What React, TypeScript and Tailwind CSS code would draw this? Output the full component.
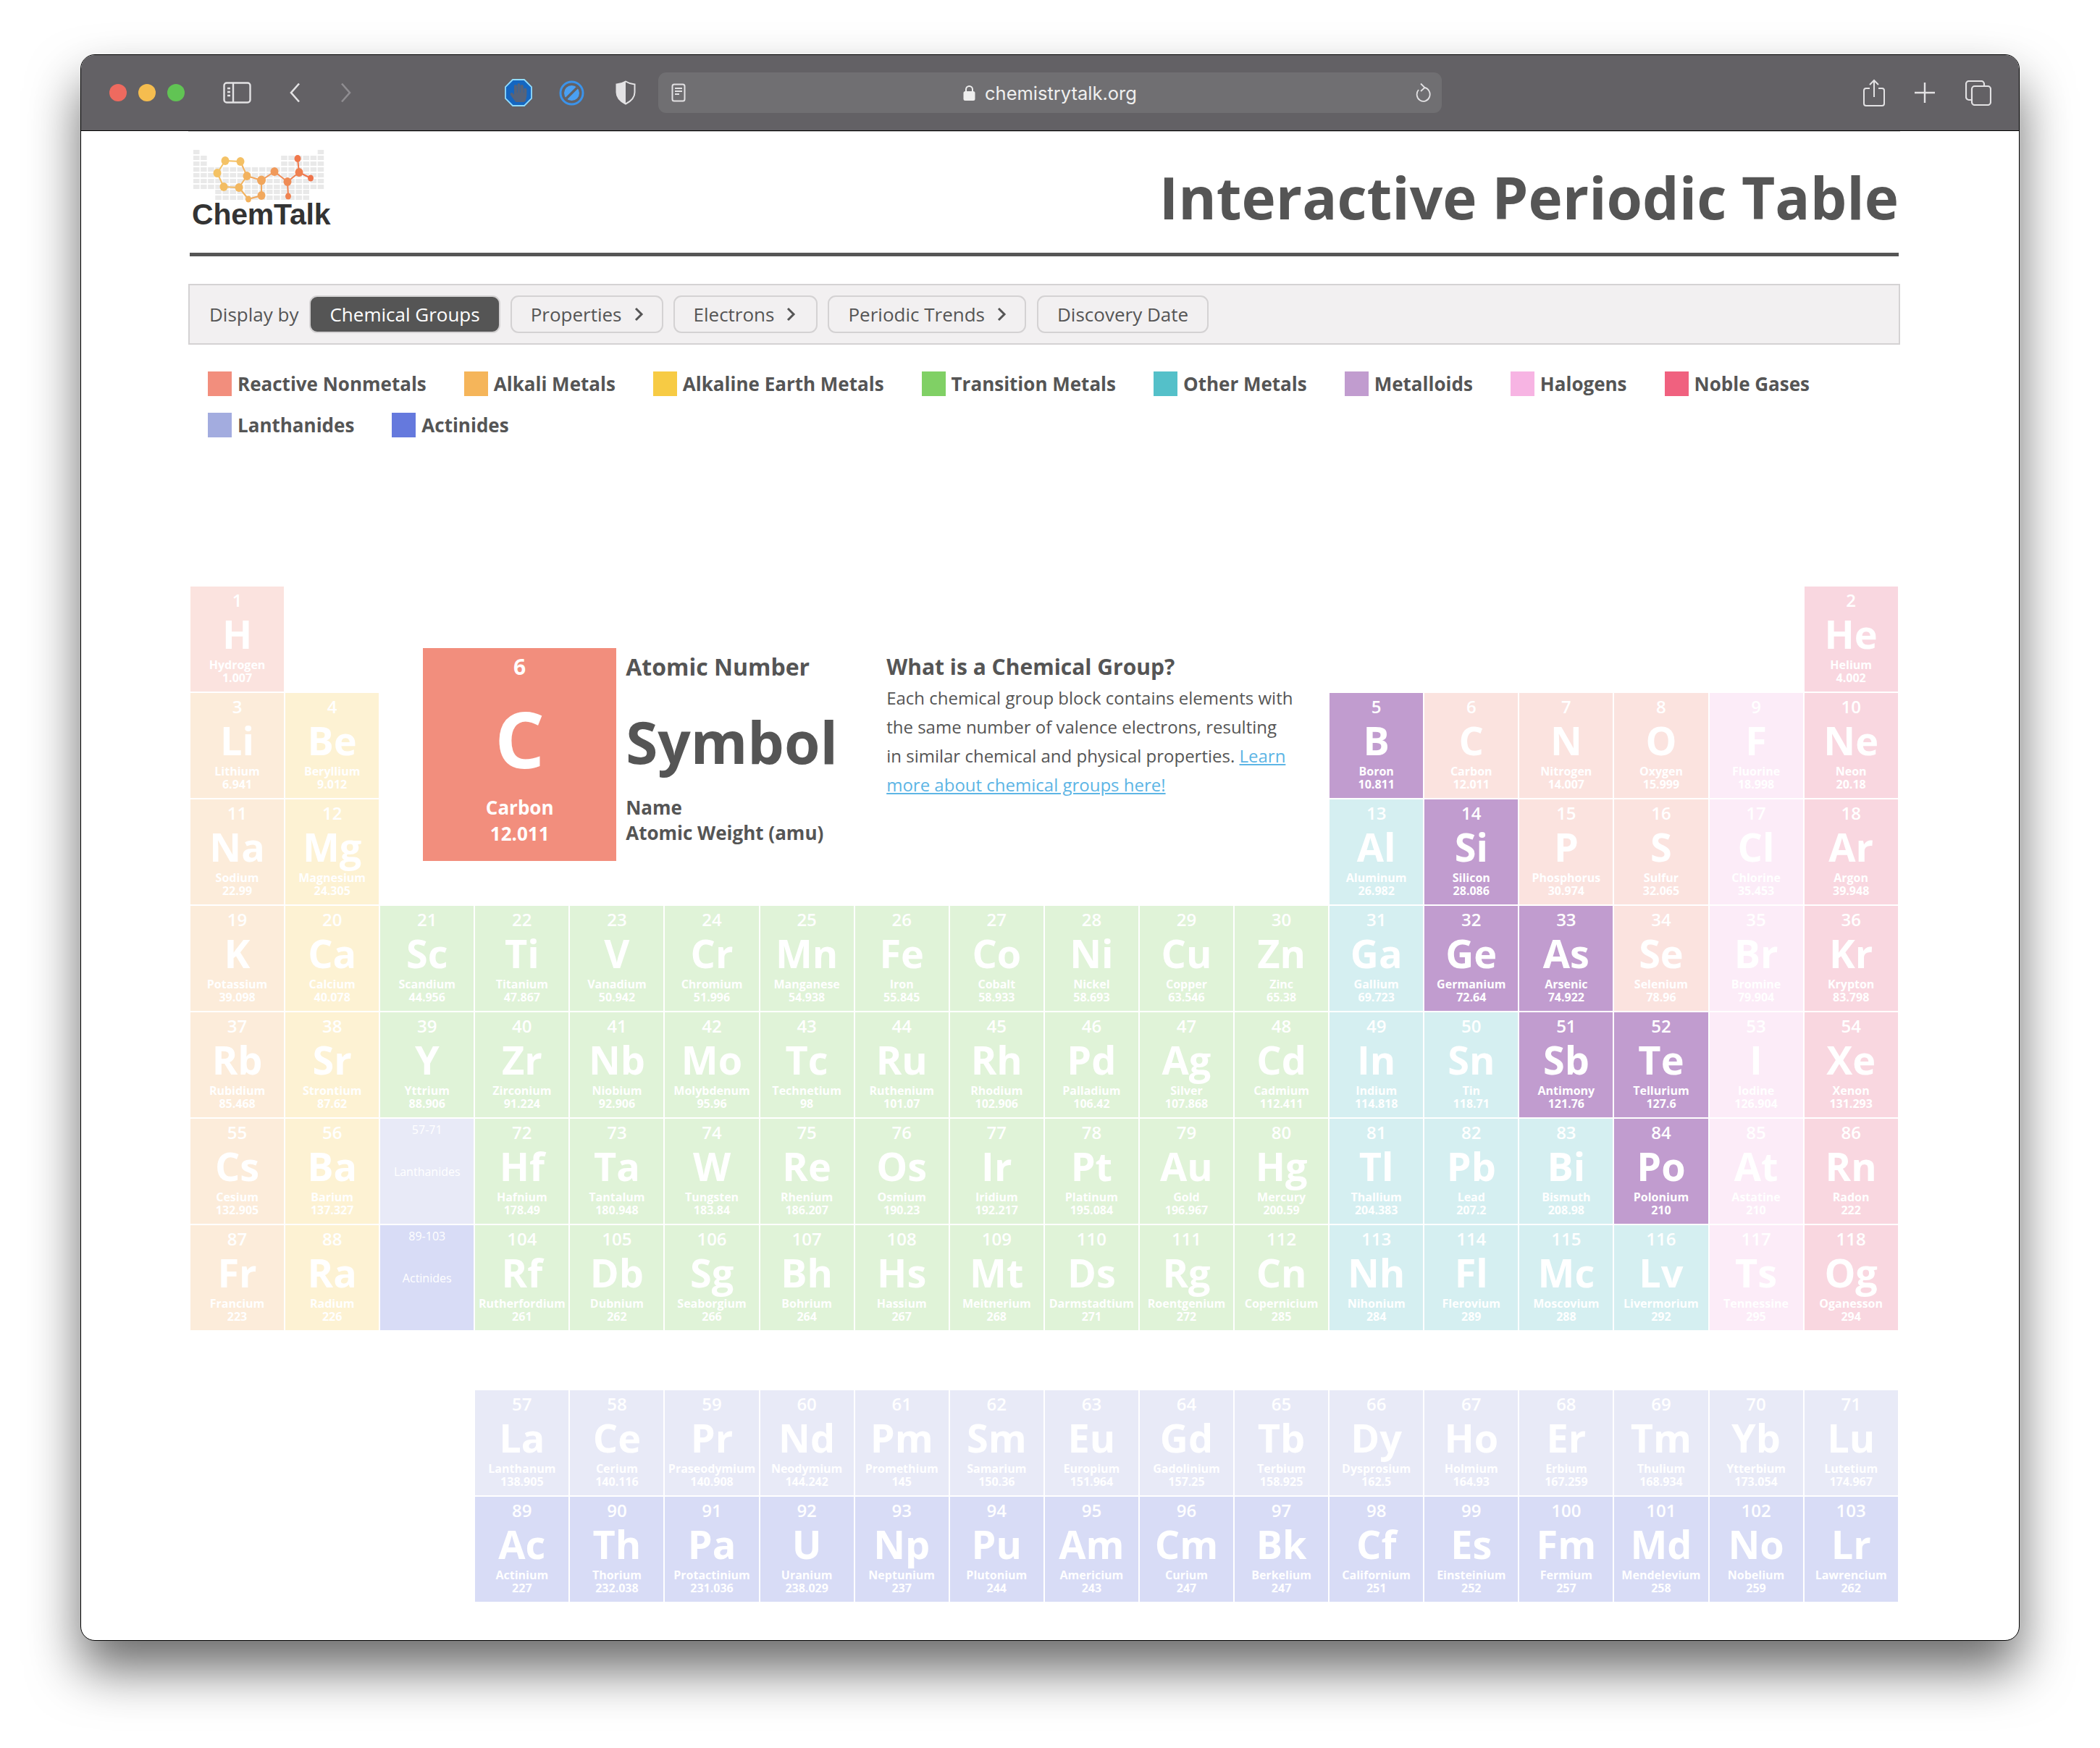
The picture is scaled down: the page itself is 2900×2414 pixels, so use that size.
import { FaHandPaper } from 'react-icons/fa';

type Group = 'reactive' | 'alkali' | 'earth' | 'transition' | 'other' | 'metalloid' | 'halogen' | 'noble' | 'lanthanide' | 'actinide';

const cellColors: Record<Group, string> = {
  reactive: 'bg-[#fbe3df]',
  alkali: 'bg-[#fcecda]',
  earth: 'bg-[#fdf2d3]',
  transition: 'bg-[#e0f3d8]',
  other: 'bg-[#d5eff1]',
  metalloid: 'bg-[#c19ccf]',
  halogen: 'bg-[#fcecf8]',
  noble: 'bg-[#f9d7e0]',
  lanthanide: 'bg-[#e8eaf7]',
  actinide: 'bg-[#d8dcf6]',
};

const legend = [
  { label: 'Reactive Nonmetals', color: 'bg-[#f28e7d]' },
  { label: 'Alkali Metals', color: 'bg-[#f5b55a]' },
  { label: 'Alkaline Earth Metals', color: 'bg-[#f7cb44]' },
  { label: 'Transition Metals', color: 'bg-[#80d065]' },
  { label: 'Other Metals', color: 'bg-[#54c0c9]' },
  { label: 'Metalloids', color: 'bg-[#c19ccf]' },
  { label: 'Halogens', color: 'bg-[#f7b4e3]' },
  { label: 'Noble Gases', color: 'bg-[#f0617f]' },
  { label: 'Lanthanides', color: 'bg-[#a3acdf]' },
  { label: 'Actinides', color: 'bg-[#6579dd]' },
];

// number|symbol|name|weight|group|row|col
const raw = `1|H|Hydrogen|1.007|reactive|1|1
2|He|Helium|4.002|noble|1|18
3|Li|Lithium|6.941|alkali|2|1
4|Be|Beryllium|9.012|earth|2|2
5|B|Boron|10.811|metalloid|2|13
6|C|Carbon|12.011|reactive|2|14
7|N|Nitrogen|14.007|reactive|2|15
8|O|Oxygen|15.999|reactive|2|16
9|F|Fluorine|18.998|halogen|2|17
10|Ne|Neon|20.18|noble|2|18
11|Na|Sodium|22.99|alkali|3|1
12|Mg|Magnesium|24.305|earth|3|2
13|Al|Aluminum|26.982|other|3|13
14|Si|Silicon|28.086|metalloid|3|14
15|P|Phosphorus|30.974|reactive|3|15
16|S|Sulfur|32.065|reactive|3|16
17|Cl|Chlorine|35.453|halogen|3|17
18|Ar|Argon|39.948|noble|3|18
19|K|Potassium|39.098|alkali|4|1
20|Ca|Calcium|40.078|earth|4|2
21|Sc|Scandium|44.956|transition|4|3
22|Ti|Titanium|47.867|transition|4|4
23|V|Vanadium|50.942|transition|4|5
24|Cr|Chromium|51.996|transition|4|6
25|Mn|Manganese|54.938|transition|4|7
26|Fe|Iron|55.845|transition|4|8
27|Co|Cobalt|58.933|transition|4|9
28|Ni|Nickel|58.693|transition|4|10
29|Cu|Copper|63.546|transition|4|11
30|Zn|Zinc|65.38|transition|4|12
31|Ga|Gallium|69.723|other|4|13
32|Ge|Germanium|72.64|metalloid|4|14
33|As|Arsenic|74.922|metalloid|4|15
34|Se|Selenium|78.96|reactive|4|16
35|Br|Bromine|79.904|halogen|4|17
36|Kr|Krypton|83.798|noble|4|18
37|Rb|Rubidium|85.468|alkali|5|1
38|Sr|Strontium|87.62|earth|5|2
39|Y|Yttrium|88.906|transition|5|3
40|Zr|Zirconium|91.224|transition|5|4
41|Nb|Niobium|92.906|transition|5|5
42|Mo|Molybdenum|95.96|transition|5|6
43|Tc|Technetium|98|transition|5|7
44|Ru|Ruthenium|101.07|transition|5|8
45|Rh|Rhodium|102.906|transition|5|9
46|Pd|Palladium|106.42|transition|5|10
47|Ag|Silver|107.868|transition|5|11
48|Cd|Cadmium|112.411|transition|5|12
49|In|Indium|114.818|other|5|13
50|Sn|Tin|118.71|other|5|14
51|Sb|Antimony|121.76|metalloid|5|15
52|Te|Tellurium|127.6|metalloid|5|16
53|I|Iodine|126.904|halogen|5|17
54|Xe|Xenon|131.293|noble|5|18
55|Cs|Cesium|132.905|alkali|6|1
56|Ba|Barium|137.327|earth|6|2
72|Hf|Hafnium|178.49|transition|6|4
73|Ta|Tantalum|180.948|transition|6|5
74|W|Tungsten|183.84|transition|6|6
75|Re|Rhenium|186.207|transition|6|7
76|Os|Osmium|190.23|transition|6|8
77|Ir|Iridium|192.217|transition|6|9
78|Pt|Platinum|195.084|transition|6|10
79|Au|Gold|196.967|transition|6|11
80|Hg|Mercury|200.59|transition|6|12
81|Tl|Thallium|204.383|other|6|13
82|Pb|Lead|207.2|other|6|14
83|Bi|Bismuth|208.98|other|6|15
84|Po|Polonium|210|metalloid|6|16
85|At|Astatine|210|halogen|6|17
86|Rn|Radon|222|noble|6|18
87|Fr|Francium|223|alkali|7|1
88|Ra|Radium|226|earth|7|2
104|Rf|Rutherfordium|261|transition|7|4
105|Db|Dubnium|262|transition|7|5
106|Sg|Seaborgium|266|transition|7|6
107|Bh|Bohrium|264|transition|7|7
108|Hs|Hassium|267|transition|7|8
109|Mt|Meitnerium|268|transition|7|9
110|Ds|Darmstadtium|271|transition|7|10
111|Rg|Roentgenium|272|transition|7|11
112|Cn|Copernicium|285|transition|7|12
113|Nh|Nihonium|284|other|7|13
114|Fl|Flerovium|289|other|7|14
115|Mc|Moscovium|288|other|7|15
116|Lv|Livermorium|292|other|7|16
117|Ts|Tennessine|295|halogen|7|17
118|Og|Oganesson|294|noble|7|18
57|La|Lanthanum|138.905|lanthanide|9|4
58|Ce|Cerium|140.116|lanthanide|9|5
59|Pr|Praseodymium|140.908|lanthanide|9|6
60|Nd|Neodymium|144.242|lanthanide|9|7
61|Pm|Promethium|145|lanthanide|9|8
62|Sm|Samarium|150.36|lanthanide|9|9
63|Eu|Europium|151.964|lanthanide|9|10
64|Gd|Gadolinium|157.25|lanthanide|9|11
65|Tb|Terbium|158.925|lanthanide|9|12
66|Dy|Dysprosium|162.5|lanthanide|9|13
67|Ho|Holmium|164.93|lanthanide|9|14
68|Er|Erbium|167.259|lanthanide|9|15
69|Tm|Thulium|168.934|lanthanide|9|16
70|Yb|Ytterbium|173.054|lanthanide|9|17
71|Lu|Lutetium|174.967|lanthanide|9|18
89|Ac|Actinium|227|actinide|10|4
90|Th|Thorium|232.038|actinide|10|5
91|Pa|Protactinium|231.036|actinide|10|6
92|U|Uranium|238.029|actinide|10|7
93|Np|Neptunium|237|actinide|10|8
94|Pu|Plutonium|244|actinide|10|9
95|Am|Americium|243|actinide|10|10
96|Cm|Curium|247|actinide|10|11
97|Bk|Berkelium|247|actinide|10|12
98|Cf|Californium|251|actinide|10|13
99|Es|Einsteinium|252|actinide|10|14
100|Fm|Fermium|257|actinide|10|15
101|Md|Mendelevium|258|actinide|10|16
102|No|Nobelium|259|actinide|10|17
103|Lr|Lawrencium|262|actinide|10|18`;

const elements = raw.split('\n').map((line) => {
  const [num, symbol, name, weight, group, row, col] = line.split('|');
  return { num, symbol, name, weight, group: group as Group, row: Number(row), col: Number(col) };
});

const ChemLogo = () => {
  const rowTops = [0, 8, 16, 24, 32, 40, 48, 55, 63];
  const squares: { x: number; y: number }[] = [];
  rowTops.forEach((y, r) => {
    for (let c = 0; c < 18; c++) {
      if (r === 0 && c !== 0 && c !== 17) continue;
      if ((r === 1 || r === 2) && c > 1 && c < 12) continue;
      if (r >= 7 && (c < 3 || c > 15)) continue;
      squares.push({ x: c * 10.1, y });
    }
  });
  const nodes: [number, number, number, string][] = [
    [44, 15, 5.5, '#f4c266'], [65, 16, 5.5, '#f4c064'], [33, 32, 5.5, '#f4c264'], [74, 36, 5.5, '#f2b25f'],
    [94, 42, 6, '#f1a65c'], [112, 30, 5.5, '#f0995a'], [130, 44, 5.5, '#ef8b55'], [146, 31, 5.5, '#ef8050'],
    [144, 12, 4.5, '#f0784c'], [162, 39, 4, '#ef744b'], [131, 64, 4, '#ef8250'], [42, 51, 5.5, '#f3bd62'],
    [63, 52, 5.5, '#f2b760'], [94, 63, 5.5, '#f1a85d'], [76, 68, 4, '#f2b25f'],
  ];
  const bonds = [[0, 1], [0, 2], [1, 3], [2, 11], [11, 12], [12, 3], [3, 4], [4, 5], [5, 6], [6, 7], [7, 8], [7, 9], [6, 10], [4, 13], [12, 14], [14, 13]];
  return (
    <svg width="192" height="74" viewBox="0 0 192 74">
      {squares.map((s) => (
        <rect key={`${s.x}-${s.y}`} x={s.x} y={s.y} width="8.5" height="6" fill="#e9e9e9" />
      ))}
      {bonds.map(([a, b]) => (
        <line key={`${a}-${b}`} x1={nodes[a][0]} y1={nodes[a][1]} x2={nodes[b][0]} y2={nodes[b][1]} stroke={nodes[b][3]} strokeWidth="2" />
      ))}
      {nodes.map(([x, y, r, c]) => (
        <ellipse key={`${x}-${y}`} cx={x} cy={y} rx={r} ry={r + 0.5} fill={c} />
      ))}
    </svg>
  );
};

const SidebarIcon = () => (
  <svg width="39" height="30" viewBox="0 0 39 30" fill="none" stroke="#e3e2e4" strokeWidth="2.4">
    <rect x="1.5" y="1.5" width="36" height="27" rx="3.5" />
    <line x1="14" y1="2" x2="14" y2="28" />
    <line x1="6" y1="9" x2="10" y2="9" />
    <line x1="6" y1="14" x2="10" y2="14" />
    <line x1="6" y1="19" x2="10" y2="19" />
  </svg>
);

const AdblockIcon = () => (
  <svg width="38" height="38" viewBox="0 0 38 38">
    <polygon points="11,1 27,1 37,11 37,27 27,37 11,37 1,27 1,11" fill="#1566c0" stroke="#8fdcff" strokeWidth="1.8" />
    <FaHandPaper x="6" y="6" size={26} color="#56637a" />
  </svg>
);

const BlockIcon = () => (
  <svg width="35" height="35" viewBox="0 0 35 35">
    <circle cx="17.5" cy="17.5" r="15.5" fill="none" stroke="#3b93ea" strokeWidth="3" />
    <circle cx="17.5" cy="17.5" r="10.5" fill="#4aa0f3" />
    <line x1="10" y1="25" x2="25" y2="10" stroke="#636165" strokeWidth="3.4" />
  </svg>
);

const ShieldIcon = () => (
  <svg width="28" height="34" viewBox="0 0 28 34">
    <path d="M14 1.5C10 4 6 5 1.5 5.5v11c0 7 5.5 12.5 12.5 16 7-3.5 12.5-9 12.5-16v-11C22 5 18 4 14 1.5Z" fill="none" stroke="#e3e2e4" strokeWidth="2" />
    <path d="M14 1.5C10 4 6 5 1.5 5.5v11c0 7 5.5 12.5 12.5 16Z" fill="#e3e2e4" />
  </svg>
);

const ReaderIcon = () => (
  <svg width="20" height="26" viewBox="0 0 20 26" fill="none" stroke="#e3e2e4" strokeWidth="2">
    <rect x="1.5" y="1.5" width="17" height="23" rx="2.5" />
    <line x1="5" y1="7" x2="15" y2="7" />
    <line x1="5" y1="11" x2="15" y2="11" />
    <line x1="5" y1="15" x2="11" y2="15" />
  </svg>
);

const LockIcon = () => (
  <svg width="17" height="21" viewBox="0 0 17 21" fill="#eeeeee">
    <rect x="0.5" y="8" width="16" height="13" rx="2.5" />
    <path d="M4 9V5.5a4.5 4.5 0 0 1 9 0V9" fill="none" stroke="#eeeeee" strokeWidth="2" />
  </svg>
);

const ReloadIcon = () => (
  <svg width="22" height="28" viewBox="0 0 22 28" fill="none" stroke="#e3e2e4" strokeWidth="1.8">
    <path d="M13 7a9 9.5 0 1 1-8 3" />
    <path d="M8 1.5l5.5 5.5L8 12" />
  </svg>
);

const ShareIcon = () => (
  <svg width="30" height="38" viewBox="0 0 30 38" fill="none" stroke="#e3e2e4" strokeWidth="2">
    <path d="M9 13H4a3 3 0 0 0-3 3v18a3 3 0 0 0 3 3h22a3 3 0 0 0 3-3V16a3 3 0 0 0-3-3h-5" />
    <path d="M15 25V2M9 8l6-6 6 6" />
  </svg>
);

const PlusIcon = () => (
  <svg width="28" height="28" viewBox="0 0 28 28" stroke="#e3e2e4" strokeWidth="2.4">
    <line x1="14" y1="0" x2="14" y2="28" />
    <line x1="0" y1="14" x2="28" y2="14" />
  </svg>
);

const TabsIcon = () => (
  <svg width="36" height="35" viewBox="0 0 36 35" fill="none" stroke="#e3e2e4" strokeWidth="2.2">
    <path d="M8 27H5a4 4 0 0 1-4-4V5a4 4 0 0 1 4-4h17a4 4 0 0 1 4 4v3" />
    <rect x="9" y="8" width="26" height="26" rx="4" />
  </svg>
);

const Chevron = () => (
  <svg className="ml-[16px]" width="14" height="20" viewBox="0 0 14 20" fill="none" stroke="#555555" strokeWidth="3">
    <path d="M3 2l8 8-8 8" />
  </svg>
);

const ElementCell = ({ el }: { el: (typeof elements)[number] }) => (
  <div
    className={`${cellColors[el.group]} flex flex-col items-center pt-[7px] text-white`}
    style={{ gridRow: el.row, gridColumn: el.col }}
  >
    <div className="text-[24px] leading-[24px] font-semibold">{el.num}</div>
    <div className="mt-[7px] text-[54px] leading-[54px] font-bold">{el.symbol}</div>
    <div className="mt-[7px] text-[16px] leading-[18px] font-bold whitespace-nowrap">{el.name}</div>
    <div className="text-[16px] leading-[18px] font-bold">{el.weight}</div>
  </div>
);

const App = () => {
  return (
    <div className="h-[2414px] w-[2900px] overflow-hidden bg-white pt-[75px] pl-[111px] font-['Open_Sans',sans-serif] text-[#555555]">
      <div className="h-[2191px] w-[2678px] overflow-hidden rounded-[20px] border border-black bg-white shadow-[0_40px_70px_rgba(0,0,0,0.58)]">
        {/* Browser toolbar */}
        <div className="flex h-[105px] items-center border-b border-black bg-[#636165] pl-[39px]">
          <div className="h-[24px] w-[24px] rounded-full bg-[#ee6a5f]" />
          <div className="ml-[16px] h-[24px] w-[24px] rounded-full bg-[#f5bd4f]" />
          <div className="ml-[16px] h-[24px] w-[24px] rounded-full bg-[#61c454]" />
          <div className="ml-[53px]">
            <SidebarIcon />
          </div>
          <svg className="ml-[52px]" width="16" height="28" viewBox="0 0 16 28" fill="none" stroke="#e3e2e4" strokeWidth="2.6">
            <path d="M14 1.5 3 14l11 12.5" />
          </svg>
          <svg className="ml-[55px]" width="16" height="28" viewBox="0 0 16 28" fill="none" stroke="#8f8d91" strokeWidth="2.6">
            <path d="M2 1.5 13 14 2 26.5" />
          </svg>
          <div className="ml-[211px]">
            <AdblockIcon />
          </div>
          <div className="ml-[37px]">
            <BlockIcon />
          </div>
          <div className="ml-[43px]">
            <ShieldIcon />
          </div>
          <div className="ml-[31px] flex h-[56px] w-[1082px] items-center rounded-[11px] bg-[#706f72] pr-[15px] pl-[18px]">
            <ReaderIcon />
            <div className="ml-[383px]">
              <LockIcon />
            </div>
            <div className="mt-[2px] ml-[13px] font-['Inter',sans-serif] text-[25.5px] leading-none font-normal text-[#efefef]">chemistrytalk.org</div>
            <div className="ml-auto">
              <ReloadIcon />
            </div>
          </div>
          <div className="ml-[582px]">
            <ShareIcon />
          </div>
          <div className="ml-[41px]">
            <PlusIcon />
          </div>
          <div className="ml-[42px]">
            <TabsIcon />
          </div>
        </div>

        <div className="ml-[148px] w-[2364px] border-t border-[#c9c9c9]">
          {/* Header */}
          <div className="mx-[2px] flex h-[172px] justify-between border-b-[5px] border-[#555555]">
            <div className="ml-[5px] pt-[25px]">
              <ChemLogo />
              <div className="-mt-[2px] -ml-[2px] font-['Liberation_Sans',sans-serif] text-[41px] leading-[34px] font-bold tracking-[-0.2px] text-[#333333]">ChemTalk</div>
            </div>
            <h1 className="mt-[50px] text-[80px] leading-[80px] font-bold whitespace-nowrap">Interactive Periodic Table</h1>
          </div>

          {/* Display controls */}
          <div className="mt-[38px] flex h-[84px] items-center border-2 border-[#d4d2d3] bg-[#f2f0f1] pl-[27px] text-[26px]">
            <span className="mr-[15px]">Display by</span>
            <button className="flex h-[52px] items-center rounded-[11px] border-2 border-[#d4d2d3] bg-[#555555] px-[26px] text-white">Chemical Groups</button>
            <button className="ml-[14px] flex h-[52px] items-center rounded-[11px] border-2 border-[#d4d2d3] pr-[25px] pl-[26px]">
              Properties
              <Chevron />
            </button>
            <button className="ml-[14px] flex h-[52px] items-center rounded-[11px] border-2 border-[#d4d2d3] pr-[28px] pl-[26px]">
              Electrons
              <Chevron />
            </button>
            <button className="ml-[14px] flex h-[52px] items-center rounded-[11px] border-2 border-[#d4d2d3] pr-[25px] pl-[26px]">
              Periodic Trends
              <Chevron />
            </button>
            <button className="ml-[15px] flex h-[52px] items-center rounded-[11px] border-2 border-[#d4d2d3] px-[26px]">Discovery Date</button>
          </div>

          {/* Legend */}
          <div className="mt-[37px] ml-[27px] flex w-[2320px] flex-wrap gap-y-[23px]">
            {legend.map((item) => (
              <div key={item.label} className="mr-[52px] flex h-[34px] items-center">
                <div className={`${item.color} h-[34px] w-[33px]`} />
                <span className="ml-[8px] text-[26px] leading-none font-bold">{item.label}</span>
              </div>
            ))}
          </div>

          {/* Table */}
          <div className="mt-[206px] ml-[3px] grid grid-cols-[repeat(18,129.1px)] grid-rows-[repeat(7,145px)_79px_repeat(2,145px)] gap-[2px]">
            <div className="col-start-3 col-end-13 row-start-1 row-end-4 flex pt-[85px] pl-[59px]">
              <div className="flex h-[294px] w-[267px] flex-col items-center bg-[#f28e7d] pt-[11px] text-white">
                <div className="text-[30px] leading-[30px] font-bold">6</div>
                <div className="mt-[30px] text-[108px] leading-[108px] font-bold">C</div>
                <div className="mt-[23px] text-[26px] leading-[36px] font-bold">Carbon</div>
                <div className="text-[26px] leading-[36px] font-bold">12.011</div>
              </div>
              <div className="ml-[13px] w-[360px] pt-[8px]">
                <div className="text-[32px] leading-[36px] font-bold">Atomic Number</div>
                <div className="mt-[45px] text-[80px] leading-[80px] font-bold">Symbol</div>
                <div className="mt-[33px] text-[26px] leading-[36px] font-bold">Name</div>
                <div className="text-[26px] leading-[35px] font-bold">Atomic Weight (amu)</div>
              </div>
              <div className="pt-[8px]">
                <div className="text-[30px] leading-[36px] font-bold">What is a Chemical Group?</div>
                <p className="mt-[5px] text-[24px] leading-[40px] whitespace-nowrap">
                  Each chemical group block contains elements with
                  <br />
                  the same number of valence electrons, resulting
                  <br />
                  in similar chemical and physical properties.{' '}
                  <a className="text-[#5db5e5] underline" href="#learn">
                    Learn
                    <br />
                    more about chemical groups here!
                  </a>
                </p>
              </div>
            </div>

            {elements.map((el) => (
              <ElementCell key={el.num} el={el} />
            ))}

            <div className="col-start-3 row-start-6 flex flex-col items-center bg-[#e8eaf7] pt-[5px] text-[16px] leading-[20px] text-white">
              <div>57-71</div>
              <div className="mt-[38px]">Lanthanides</div>
            </div>
            <div className="col-start-3 row-start-7 flex flex-col items-center bg-[#d8dcf6] pt-[5px] text-[16px] leading-[20px] text-white">
              <div>89-103</div>
              <div className="mt-[38px]">Actinides</div>
            </div>
          </div>
        </div>
      </div>
    </div>
  );
};

export default App;
